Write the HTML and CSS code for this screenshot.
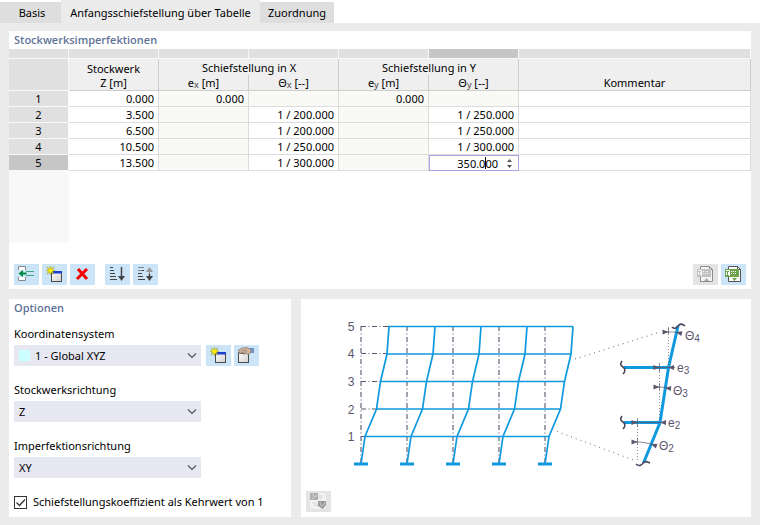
FILE: index.html
```html
<!DOCTYPE html>
<html lang="de">
<head>
<meta charset="utf-8">
<title>Anfangsschiefstellung über Tabelle</title>
<link rel="stylesheet" href="styles.css">
</head>
<body>
<svg class="defs" width="0" height="0" aria-hidden="true">
  <defs>
    <linearGradient id="pane" x1="0" y1="0" x2="1" y2="1"><stop offset="0" stop-color="#fff"/><stop offset="1" stop-color="#cfcfcf"/></linearGradient>
    <symbol id="star" viewBox="0 0 10 10"><path d="M5 0 6 3 9 1 7 4 10 5 7 6 9 9 6 7 5 10 4 7 1 9 3 6 0 5 3 4 1 1 4 3z" fill="#fff200" stroke="#8d8a28" stroke-width=".5"/></symbol>
    <symbol id="new" viewBox="0 0 25 21"><rect x="9.500" y="7.500" width="10" height="10" fill="url(#pane)" stroke="#4a4a4a"/><path d="M10 7h10v2.500H10z" fill="#1c3fd0"/><use href="#star" x="4" y="2" width="9" height="9"/></symbol>
    <symbol id="export" viewBox="0 0 25 21"><path d="M7.500 5V2.500h9l3 3v12h-12V13" fill="#fff" stroke="#555"/><path d="M16.500 2.500v3h3" fill="none" stroke="#555"/><rect x="4.500" y="5.500" width="13" height="7" fill="#fff" stroke="currentColor"/><path d="M9 6h8v6H9zM6 7h2v1H7v3h1v1H5v-1h1V8H5V7z" fill="currentColor"/><path d="M10 7.500h6M10 9.500h6" stroke="#fff" stroke-dasharray="1 1"/></symbol>
  </defs>
</svg>

<nav class="tabs" aria-label="Register">
  <button type="button" class="tab tab-basis">Basis</button>
  <button type="button" class="tab tab-active">Anfangsschiefstellung über Tabelle</button>
  <button type="button" class="tab tab-zuordnung">Zuordnung</button>
</nav>

<main class="page">
  <section class="panel imperfections">
    <h2>Stockwerksimperfektionen</h2>
    <div class="sheet">
      <table>
        <colgroup><col class="c-num"><col class="c-val"><col class="c-val"><col class="c-val"><col class="c-val"><col class="c-val"><col></colgroup>
        <thead>
          <tr class="strip"><td></td><td></td><td></td><td></td><td></td><td class="current"></td><td></td></tr>
          <tr>
            <th rowspan="2" class="corner"></th>
            <th rowspan="2" class="story">Stockwerk<br>Z [m]</th>
            <th colspan="2" class="group">Schiefstellung in X</th>
            <th colspan="2" class="group">Schiefstellung in Y</th>
            <th class="group"></th>
          </tr>
          <tr class="units">
            <th>e<small>x</small> [m]</th><th>Θ<small>x</small> [--]</th>
            <th>e<small>y</small> [m]</th><th>Θ<small>y</small> [--]</th>
            <th>Kommentar</th>
          </tr>
        </thead>
        <tbody>
          <tr><th>1</th><td>0.000</td><td class="locked">0.000</td><td class="locked"></td><td class="locked">0.000</td><td class="locked"></td><td></td></tr>
          <tr><th>2</th><td>3.500</td><td class="locked"></td><td>1 / 200.000</td><td class="locked"></td><td>1 / 250.000</td><td></td></tr>
          <tr><th>3</th><td>6.500</td><td class="locked"></td><td>1 / 200.000</td><td class="locked"></td><td>1 / 250.000</td><td></td></tr>
          <tr><th>4</th><td>10.500</td><td class="locked"></td><td>1 / 250.000</td><td class="locked"></td><td>1 / 300.000</td><td></td></tr>
          <tr><th class="current">5</th><td>13.500</td><td class="locked"></td><td>1 / 300.000</td><td class="locked"></td>
            <td class="editing"><div class="editor"><input type="text" value="350.000" aria-label="Θy Stockwerk 5"><i class="caret"></i><svg width="7" height="9" viewBox="0 0 7 9" aria-hidden="true"><path d="M1 3h5L3.500 0zM1 6h5L3.500 9z" fill="#555"/></svg></div></td><td></td></tr>
        </tbody>
      </table>
    </div>
    <div class="toolbar">
      <button type="button" class="tool" aria-label="Zeile einfügen"><svg viewBox="0 0 25 21"><path d="M4.500 6V2.500h7V6M4.500 13v3.500h7V13" fill="#fff" stroke="#888"/><path d="M12 7.500h8M12 11.500h8" stroke="#45a77c"/><path d="M4.500 9.500 9 6v2.500h3.500v2H9V13z" fill="#008b45"/></svg></button>
      <button type="button" class="tool" aria-label="Neu"><svg><use href="#new"/></svg></button>
      <button type="button" class="tool" aria-label="Löschen"><svg viewBox="0 0 25 21"><path d="m8 5 9 10M17 5 7 15" fill="none" stroke="#f40000" stroke-width="3"/></svg></button>
      <button type="button" class="tool gap" aria-label="Sortieren"><svg viewBox="0 0 25 21"><path d="M5 3.500h3M5 6.500h4M5 9.500h5M5 12.500h6M5 15.500h7" stroke="#444"/><path d="M16.500 3v11" stroke="#444" stroke-width="1.500"/><path d="M13 12h7l-3.500 5z" fill="#444"/></svg></button>
      <button type="button" class="tool" aria-label="Sortierung umkehren"><svg viewBox="0 0 25 21"><path d="M5 3.500h6M5 6.500h4" stroke="#888"/><path d="M5 9.500h4M5 12.500h5M5 15.500h7M9 6.500h2" stroke="#444"/><path d="M16.500 7v4" stroke="#888"/><path d="M13 8h7l-3.500-5z" fill="#999"/><path d="M16.500 10v4" stroke="#444" stroke-width="1.500"/><path d="M13 12h7l-3.500 5z" fill="#444"/></svg></button>
      <button type="button" class="tool off push" aria-label="Import"><svg viewBox="0 0 25 21"><use href="#export"/><path d="M11 17h5l-2.500-3z" fill="currentColor"/></svg></button>
      <button type="button" class="tool excel" aria-label="Export"><svg viewBox="0 0 25 21"><use href="#export"/><path d="M11 14h5l-2.500 3z" fill="currentColor"/></svg></button>
    </div>
  </section>

  <div class="lower">
    <section class="panel options">
      <h2>Optionen</h2>
      <label for="koord">Koordinatensystem</label>
      <div class="field">
        <div class="select swatched"><i class="swatch"></i><select id="koord"><option>1 - Global XYZ</option></select><svg class="chevron" viewBox="0 0 10 6"><path d="m1 .5 4 4 4-4"/></svg></div>
        <button type="button" class="tool" aria-label="Neues Koordinatensystem"><svg><use href="#new"/></svg></button>
        <button type="button" class="tool" aria-label="Koordinatensystem bearbeiten"><svg viewBox="0 0 25 21"><rect x="4.500" y="7.500" width="10" height="10" fill="url(#pane)" stroke="#4a4a4a"/><path d="M5 7h7v2H5z" fill="#555"/><path d="M15 3h5v5h-4z" fill="#6d94c8"/><path d="M4 5.500 8 3l5-.5 4 2v3l-3 2-2-1-2 1-1-2-3 1H4l2-2z" fill="#d0b29c" stroke="#87796f" stroke-width=".7"/><path d="m8 6 4-1M10 8l3-2" stroke="#87796f" stroke-width=".7"/></svg></button>
      </div>
      <label for="stock">Stockwerksrichtung</label>
      <div class="field"><div class="select"><select id="stock"><option>Z</option></select><svg class="chevron" viewBox="0 0 10 6"><path d="m1 .5 4 4 4-4"/></svg></div></div>
      <label for="imp">Imperfektionsrichtung</label>
      <div class="field"><div class="select"><select id="imp"><option>XY</option></select><svg class="chevron" viewBox="0 0 10 6"><path d="m1 .5 4 4 4-4"/></svg></div></div>
      <div class="check">
        <span class="box"><input type="checkbox" id="kehrwert" checked><svg viewBox="0 0 13 13" aria-hidden="true"><path d="m2.500 6.500 3 3 5.500-6"/></svg></span>
        <label for="kehrwert">Schiefstellungskoeffizient als Kehrwert von 1</label>
      </div>
    </section>

    <section class="panel preview">
      <svg class="diagram" viewBox="1 -1 450 218" role="img" aria-label="Schiefstellung der Stockwerke">
        <defs>
          <path id="axis" d="M0 26V164"/>
          <path id="column" d="M0 164 4 136.500 15.500 109 19.500 81.500 26 54 28 26.500"/>
          <path id="base" d="M-7 164H7"/>
          <path id="right" d="M0 0-6-2.500V2.500z"/>
          <path id="left" d="M0 0 6-2.500V2.500z"/>
        </defs>
        <g class="axes">
          <use href="#axis" x="61"/><use href="#axis" x="107"/><use href="#axis" x="153"/><use href="#axis" x="199"/><use href="#axis" x="245"/>
          <path d="M61 26.500h28M61 53.500h26M61 81.500h20M61 109h16M61 136.500h5"/>
        </g>
        <g class="frame">
          <path d="M88 26.500H273M86.500 54H271M80 81.500H265M76 109H260.500M64.500 136.500H249"/>
          <use href="#column" x="61"/><use href="#column" x="107"/><use href="#column" x="153"/><use href="#column" x="199"/><use href="#column" x="245"/>
        </g>
        <g class="bases"><use href="#base" x="61"/><use href="#base" x="107"/><use href="#base" x="153"/><use href="#base" x="199"/><use href="#base" x="245"/></g>
        <g class="levels"><text x="51" y="31">5</text><text x="51" y="58">4</text><text x="51" y="86">3</text><text x="51" y="114">2</text><text x="51" y="141">1</text></g>
        <path class="leader" d="M275 59 360 32M257 131.500 336 161"/>
        <path class="member" d="M378 26 368.500 67.500 360 122.500 343.500 163M324 67.500H368M324 122.500H360"/>
        <path class="guide" d="M368.500 28V67M359.500 66V122M337.500 120V162"/>
        <path class="break" d="M372 27c3 3 5 0 6-1 2-3 5-2 7 0M322 61c-3 4 0 5 1 6 3 2 2 5 0 7M322 116c-3 4 0 5 1 6 3 2 2 5 0 7M336 164c3 3 6 1 7-1 2-3 5-1 7 0"/>
        <g class="dims">
          <path d="M363 32h4Q374 31 382 34M368.500 27v7M354 67.500h21M359.500 63v9M354 87h7Q366 88 371 88M359.500 83v7M332 122.500h33M337.500 118v9M332 142h8Q350 143 356 146M337.500 138v7"/>
          <use href="#right" x="368.500" y="32"/><use href="#left" transform="translate(376 32) rotate(15)"/>
          <use href="#right" x="359.500" y="67.500"/><use href="#left" x="368" y="67.500"/>
          <use href="#right" x="359.500" y="87"/><use href="#left" transform="translate(365 88) rotate(5)"/>
          <use href="#right" x="337.500" y="122.500"/><use href="#left" x="360" y="122.500"/>
          <use href="#right" x="337.500" y="142"/><use href="#left" transform="translate(351 144) rotate(20)"/>
        </g>
        <g class="marks">
          <text x="385" y="40">Θ<tspan class="sub" dy="2">4</tspan></text>
          <text x="377" y="72">e<tspan class="sub" dy="2">3</tspan></text>
          <text x="373" y="95">Θ<tspan class="sub" dy="2">3</tspan></text>
          <text x="368" y="127">e<tspan class="sub" dy="2">2</tspan></text>
          <text x="359" y="150">Θ<tspan class="sub" dy="2">2</tspan></text>
        </g>
      </svg>
      <button type="button" class="tool off view" aria-label="Ansicht"><svg viewBox="0 0 25 21"><rect x="4" y="2" width="16" height="16" fill="#f1f1f1"/><path d="M4 2h8v7H4z" fill="#b0b0b0"/><path d="m6 3 3 3 2-2M6 8l2-2" stroke="#d0d0d0" fill="none"/><path d="M12 10h8v4l-3 4-5-3z" fill="#999"/><path d="m14 11 1 4 3-1 1-3" stroke="#c4c4c4" fill="none"/><path d="M12 5h5M12 7h4M6 12h5M8 14h4" stroke="#d4d4d4"/></svg></button>
    </section>
  </div>
</main>
</body>
</html>
```
FILE: styles.css
```css
* { box-sizing: border-box; }
body {
  margin: 0;
  min-height: 100vh;
  background: #ebebeb;
  color: #000;
  font: 11px/16px "Noto Sans", "Open Sans", sans-serif;
}
.defs { position: absolute; }
button, input, select { font: inherit; color: inherit; margin: 0; padding: 0; border: 0; border-radius: 0; }
svg { display: block; }

.tabs { display: flex; align-items: flex-end; height: 23px; background: #fff; }
.tab { height: 21px; background: #dedede; }
.tab-basis { width: 61px; padding-left: 3px; }
.tab-active { width: 199px; height: 23px; padding-top: 2px; background: #ebebeb; }
.tab-zuordnung { width: 74px; }

.page { display: flex; flex-direction: column; gap: 10px; padding: 8px 9px; }
.panel { background: #fff; }
h2 { margin: 0; padding: 1px 5px; color: #5f7399; font: 600 11px/16px "Open Sans", "Noto Sans", sans-serif; }

.sheet { min-height: 194px; background: linear-gradient(to right, #f8f8f8 60px, #fff 60px); }
table { width: 100%; table-layout: fixed; border-collapse: separate; border-spacing: 0; }
.c-num { width: 60px; }
.c-val { width: 90px; }
th, td { height: 16px; padding: 0; line-height: 15px; font-weight: 400; white-space: nowrap; }
.strip td { height: 10px; background: #e0e0e0; border-right: 1px solid #f8f8f8; border-bottom: 1px solid #f8f8f8; }
.strip .current, tbody .current { background: #c6c6c6; }
thead th { background: #efefef; border-right: 1px solid #cdcdcd; }
thead .group { padding-left: 1px; }
thead .corner { background: #e0e0e0; border-right-color: #f8f8f8; border-bottom: 1px solid #f8f8f8; }
thead .story { line-height: 14px; padding-top: 2px; border-bottom: 1px solid #cdcdcd; }
.units th { border-bottom: 1px solid #cdcdcd; }
small { position: relative; top: 1px; font-size: 9px; line-height: 1px; color: #444; }
tbody th { background: #e0e0e0; border-right: 1px solid #f8f8f8; border-bottom: 1px solid #f8f8f8; }
tbody td { padding-right: 4px; text-align: right; border-right: 1px solid #dcdcdc; border-bottom: 1px solid #dcdcdc; }
tbody .locked { background: #f9faf5; }
tbody .editing { padding: 0; border-color: #a8a4e4; }
.editor { position: relative; display: flex; align-items: center; height: 15px; padding-right: 5px; border: solid #a8a4e4; border-width: 1px 0 0 1px; }
.editor input { flex: 1; min-width: 0; height: 14px; padding-right: 8px; text-align: right; background: transparent; outline: 0; }
.caret { position: absolute; right: 32px; top: 1px; width: 1px; height: 12px; background: #000; }

.toolbar { display: flex; gap: 3px; padding: 21px 5px 4px; }
.tool { flex: none; width: 25px; height: 21px; background: #cce4f7; color: #6b6b6b; }
.tool svg { width: 25px; height: 21px; }
.gap { margin-left: 7px; }
.push { margin-left: auto; }
.off { background: #e4e4e4; color: #aaa; }
.off use { opacity: .6; }
.excel { color: #6da24f; }

.lower { display: grid; grid-template-columns: 282fr 450fr; gap: 10px; }
.options { padding-bottom: 6px; }
.options > label { display: block; margin: 9px 5px 3px; }
.field { display: flex; gap: 3px; padding: 0 5px; margin-bottom: 16px; }
.select { position: relative; width: 187px; margin-right: 2px; }
.select select { display: block; width: 100%; height: 21px; padding-left: 5px; appearance: none; background: #e7e7f2; }
.swatched select { padding-left: 21px; }
.swatch { position: absolute; left: 5px; top: 5px; width: 11px; height: 11px; background: #ccffff; }
.chevron { position: absolute; right: 4px; top: 8px; width: 10px; height: 6px; fill: none; stroke: #555; stroke-width: 1.2; pointer-events: none; }
.check { display: flex; align-items: center; gap: 6px; padding: 0 5px; }
.box { position: relative; width: 13px; height: 13px; }
.box input { display: block; width: 13px; height: 13px; appearance: none; border: 1px solid #333; background: #fff; }
.box svg { position: absolute; inset: 0; fill: none; stroke: #333; stroke-width: 1.3; pointer-events: none; }

.preview { position: relative; }
.view { position: absolute; left: 5px; bottom: 5px; }
.diagram { width: 100%; font-family: "Liberation Sans", Arial, sans-serif; }
.axes { fill: none; stroke: #5b566d; stroke-width: 1.1; stroke-dasharray: 5 2.5 1 2.5; }
.frame { fill: none; stroke: #0f99df; stroke-width: 1.7; }
.bases { stroke: #0f99df; stroke-width: 3; }
.levels { fill: #5b566d; font-size: 12px; text-anchor: middle; }
.leader { fill: none; stroke: #666; stroke-width: 1; stroke-dasharray: 1 4; }
.member { fill: none; stroke: #0f99df; stroke-width: 3; }
.guide { fill: none; stroke: #777; stroke-width: .8; stroke-dasharray: 1 2; }
.break { fill: none; stroke: #4b465d; stroke-width: 1.6; }
.dims { fill: #5b566d; }
.dims > path { fill: none; stroke: #5b566d; stroke-width: .7; }
.marks { fill: #5b566d; font-size: 12px; }
.sub { font-size: 10px; }
```
